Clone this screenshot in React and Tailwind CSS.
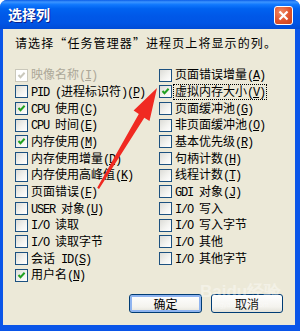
import React from "react";

const LEFT = [
  { t: "映像名称", k: "I", checked: true, disabled: true },
  { t: "PID (进程标识符)", k: "P" },
  { t: "CPU 使用", k: "C", checked: true },
  { t: "CPU 时间", k: "E" },
  { t: "内存使用", k: "M", checked: true },
  { t: "内存使用增量", k: "D" },
  { t: "内存使用高峰值", k: "K" },
  { t: "页面错误", k: "F" },
  { t: "USER 对象", k: "U" },
  { t: "I/O 读取" },
  { t: "I/O 读取字节" },
  { t: "会话 ID", k: "S" },
  { t: "用户名", k: "N", checked: true },
];

const RIGHT = [
  { t: "页面错误增量", k: "A" },
  { t: "虚拟内存大小", k: "V", checked: true, focused: true },
  { t: "页面缓冲池", k: "G" },
  { t: "非页面缓冲池", k: "O" },
  { t: "基本优先级", k: "R" },
  { t: "句柄计数", k: "H" },
  { t: "线程计数", k: "T" },
  { t: "GDI 对象", k: "J" },
  { t: "I/O 写入" },
  { t: "I/O 写入字节" },
  { t: "I/O 其他" },
  { t: "I/O 其他字节" },
];

const MONO = "font-['Liberation_Mono',monospace] tracking-[-1.2px]";

// split latin / cjk runs so latin gets the narrow mono look
function Runs({ text }) {
  const parts = text.match(/[\x20-\x7e]+|[^\x20-\x7e]+/g) || [];
  return parts.map((p, i) =>
    /^[\x20-\x7e]/.test(p) ? (
      <span key={i} className={MONO}>{p}</span>
    ) : (
      <span key={i}>{p}</span>
    )
  );
}

function CheckBox({ checked, disabled }) {
  return (
    <div
      className={`w-[13px] h-[13px] shrink-0 border flex items-center justify-center ${
        disabled
          ? "border-[#cac8bb] bg-white"
          : "border-[#1c5180] bg-[linear-gradient(135deg,#dcdcd7_0%,#f4f4f1_60%,#ffffff_100%)]"
      }`}
    >
      {checked && (
        <svg width="11" height="11" viewBox="0 0 11 11">
          <path
            d="M2.5 5 L4.5 7.2 L8.6 2.8"
            fill="none"
            stroke={disabled ? "#cac8bb" : "#21a121"}
            strokeWidth="2"
          />
        </svg>
      )}
    </div>
  );
}

function Row({ item }) {
  return (
    <div className="h-[16.67px] flex items-center">
      <CheckBox checked={item.checked} disabled={item.disabled} />
      <span
        className={`ml-[1px] px-[1px] border leading-[12px] whitespace-pre ${
          item.focused ? "border-dotted border-black" : "border-transparent"
        } ${item.disabled ? "text-[#aca899]" : "text-black"}`}
      >
        <Runs text={item.t} />
        {item.k && (
          <span className={MONO}>
            (<u>{item.k}</u>)
          </span>
        )}
      </span>
    </div>
  );
}

export default function App() {
  return (
    <div className="relative w-[300px] h-[331px] bg-white font-['Noto_Sans_CJK_SC',sans-serif] text-[12px]">
      <div className="w-full h-full flex flex-col rounded-t-[7px] overflow-hidden bg-[#0a55e8]">
        {/* title bar */}
        <div className="h-[29px] shrink-0 flex items-center justify-between pl-[8px] pr-[7px] bg-[linear-gradient(180deg,#0a5de8_0%,#3c95ff_7%,#1078fd_16%,#0062f0_30%,#0058e8_55%,#0055e5_80%,#004cd6_100%)]">
          <span className="text-white font-bold text-[14px] [text-shadow:1px_1px_#0a1f8c]">
            选择列
          </span>
          <div className="w-[19px] h-[19px] mt-[2px] rounded-[3px] border border-white bg-[radial-gradient(circle_at_35%_30%,#f08a64_0%,#e0532c_55%,#c8421c_100%)] flex items-center justify-center">
            <svg width="11" height="11" viewBox="0 0 11 11">
              <path d="M1.5 1.5 L9.5 9.5 M9.5 1.5 L1.5 9.5" stroke="#fff" strokeWidth="2.2" />
            </svg>
          </div>
        </div>

        {/* client area */}
        <div className="flex-1 ml-[3px] mr-[5px] mb-[6px] bg-[#ece9d8] flex flex-col pl-[12px] pr-[12px]">
          <div className="mt-[6px] h-[16px] leading-[16px] whitespace-pre text-black tracking-[1.1px]">
            请选择“任务管理器”进程页上将显示的列。
          </div>

          <div className="mt-[16px] flex">
            <div className="w-[144px] flex flex-col">
              {LEFT.map((it, i) => (
                <Row key={i} item={it} />
              ))}
            </div>
            <div className="flex flex-col">
              {RIGHT.map((it, i) => (
                <Row key={i} item={it} />
              ))}
            </div>
          </div>

          <div className="mt-auto mb-[12px] flex justify-end gap-[9px]">
            <button
              type="button"
              className="w-[73px] h-[19px] rounded-[3px] border border-[#003c74] bg-[linear-gradient(180deg,#ffffff_0%,#f4f3ee_70%,#e3e1d8_100%)] shadow-[inset_0_0_0_2px_#8fb4f0] flex items-center justify-center text-black leading-none"
            >
              确定
            </button>
            <button
              type="button"
              className="w-[72px] h-[19px] rounded-[3px] border border-[#003c74] bg-[linear-gradient(180deg,#ffffff_0%,#f4f3ee_70%,#e3e1d8_100%)] flex items-center justify-center text-black leading-none"
            >
              取消
            </button>
          </div>
        </div>
      </div>

      {/* red annotation arrow */}
      <svg
        className="absolute left-0 top-0 pointer-events-none"
        width="300"
        height="331"
        viewBox="0 0 300 331"
      >
        <polygon
          points="157,88 149.5,121 144.3,117.8 99,189 97.2,187.8 138.8,114 133.6,110.6"
          fill="#f02a22"
        />
      </svg>

      {/* faint watermark */}
      <div className="absolute left-[200px] top-[283px] pointer-events-none flex flex-col items-center text-white/40">
        <span className="text-[17px] font-bold leading-[18px] font-['Liberation_Sans',sans-serif]">Baidu经验</span>
        <span className="text-[7px] leading-[7px] font-['Liberation_Sans',sans-serif]">jingyan.baidu.com</span>
      </div>
    </div>
  );
}
